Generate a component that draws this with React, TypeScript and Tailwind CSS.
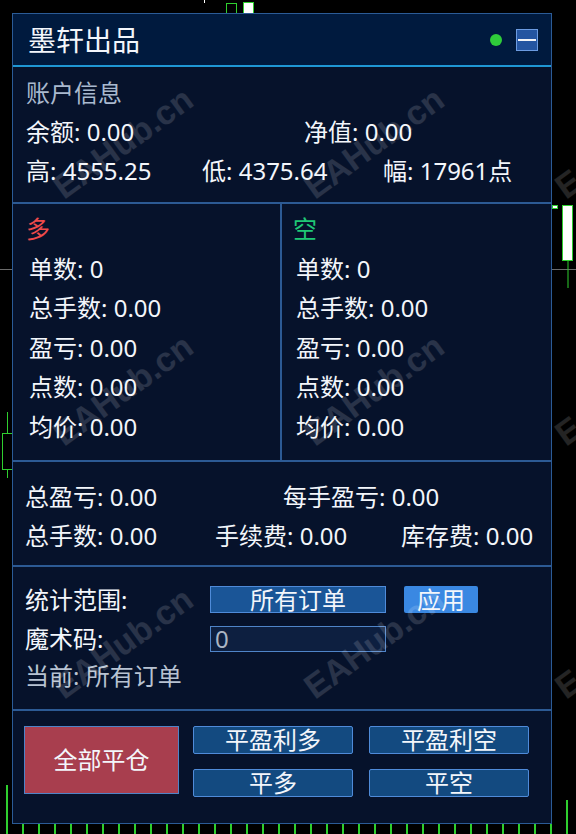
import React from 'react'

// Trading stats panel floating over a dark chart

const FONT = "font-['Noto_Sans','Noto_Sans_CJK_SC',sans-serif]"

const marks = [
  'left-[123px] top-[143px]',
  'left-[374px] top-[143px]',
  'left-[625px] top-[143px]',
  'left-[123px] top-[390px]',
  'left-[374px] top-[390px]',
  'left-[625px] top-[390px]',
  'left-[123px] top-[643px]',
  'left-[374px] top-[643px]',
  'left-[625px] top-[643px]',
  'left-[123px] top-[896px]',
  'left-[374px] top-[896px]',
]

const sideRows = ['单数: 0', '总手数: 0.00', '盈亏: 0.00', '点数: 0.00', '均价: 0.00']

const ChartBackdrop: React.FC = () => {
  const ticks = []
  for (let x = 23; x <= 551; x += 16) ticks.push(x)
  return (
    <svg className="absolute inset-0 h-full w-full" viewBox="0 0 576 834">
      <line x1="0" y1="269.5" x2="576" y2="269.5" stroke="#6b6b6b" strokeWidth="1" />
      {ticks.map((x) => (
        <line key={x} x1={x} y1="824" x2={x} y2="834" stroke="#2fcf2f" strokeWidth="2" />
      ))}
      <line x1="7" y1="785" x2="7" y2="834" stroke="#2fcf2f" strokeWidth="2" />
      <line x1="567" y1="800" x2="567" y2="834" stroke="#2fcf2f" strokeWidth="2" />
      <line x1="204.5" y1="0" x2="204.5" y2="3" stroke="#ffffff" strokeWidth="1" />
      <rect x="226.5" y="3.5" width="10" height="12" fill="none" stroke="#2fcf2f" strokeWidth="1" />
      <rect x="243.5" y="2.5" width="10" height="12" fill="#ffffff" stroke="#2fcf2f" strokeWidth="1" />
      <rect x="562.5" y="205.5" width="10" height="55" fill="#ffffff" stroke="#2fcf2f" strokeWidth="1" />
      <line x1="568" y1="261" x2="568" y2="288" stroke="#2fcf2f" strokeWidth="1" />
      <rect x="552.5" y="205.5" width="5" height="3" fill="#ffffff" stroke="#2fcf2f" strokeWidth="1" />
      <line x1="7.5" y1="412" x2="7.5" y2="478" stroke="#2fcf2f" strokeWidth="1" />
      <rect x="2.5" y="433.5" width="10" height="36" fill="#000000" stroke="#2fcf2f" strokeWidth="1" />
    </svg>
  )
}

const App: React.FC = () => {
  return (
    <div className={`relative h-[834px] w-[576px] overflow-hidden bg-black ${FONT}`}>
      <ChartBackdrop />

      <div className="relative ml-[12px] mt-[13px] flex h-[811px] w-[540px] flex-col border border-[#2b5b96] bg-[#06122b] text-[24px] leading-none text-[#f3f6fb]">
        {/* title bar */}
        <div className="flex h-[53px] items-center justify-between border-b-2 border-[#1f97d4] bg-[#001a3e] pl-[15px] pr-[13px]">
          <span className="text-[28px]">墨轩出品</span>
          <div className="flex items-center gap-[14px]">
            <span className="h-[12px] w-[12px] rounded-full bg-[#2fcc3a]" />
            <button className="flex h-[22px] w-[22px] items-center justify-center border border-[#6c9be0] bg-[#2455a1]">
              <span className="h-[2px] w-[18px] bg-[#f2f4f8]" />
            </button>
          </div>
        </div>

        {/* account */}
        <div className="h-[137px] border-b-2 border-[#2c5a94] pl-[13px] pt-[6px]">
          <div className="flex h-[39px] items-center text-[#a9b9cf]">账户信息</div>
          <div className="flex h-[39px] items-center">
            <span className="w-[278px]">余额: 0.00</span>
            <span>净值: 0.00</span>
          </div>
          <div className="flex h-[39px] items-center">
            <span className="w-[176px]">高: 4555.25</span>
            <span className="w-[181px]">低: 4375.64</span>
            <span>幅: 17961点</span>
          </div>
        </div>

        {/* long / short */}
        <div className="flex h-[258px] border-b-2 border-[#2c5a94]">
          <div className="w-[269px] border-r-2 border-[#2c5a94] pt-[5px]">
            <div className="flex h-[40px] items-center pl-[13px] text-[#ef4b4b]">多</div>
            {sideRows.map((r) => (
              <div key={r} className="flex h-[39.5px] items-center pl-[16px]">{r}</div>
            ))}
          </div>
          <div className="flex-1 pt-[5px]">
            <div className="flex h-[40px] items-center pl-[11px] text-[#1fc876]">空</div>
            {sideRows.map((r) => (
              <div key={r} className="flex h-[39.5px] items-center pl-[14px]">{r}</div>
            ))}
          </div>
        </div>

        {/* totals */}
        <div className="h-[105px] border-b-2 border-[#2c5a94] pl-[12px] pt-[15px]">
          <div className="flex h-[39px] items-center">
            <span className="w-[258px]">总盈亏: 0.00</span>
            <span>每手盈亏: 0.00</span>
          </div>
          <div className="flex h-[39px] items-center">
            <span className="w-[190px]">总手数: 0.00</span>
            <span className="w-[186px]">手续费: 0.00</span>
            <span>库存费: 0.00</span>
          </div>
        </div>

        {/* filter */}
        <div className="flex h-[144px] flex-col border-b-2 border-[#2c5a94] pl-[12px] pt-[19px]">
          <div className="flex h-[27px] items-center">
            <span className="w-[185px]">统计范围:</span>
            <button className="flex h-[27px] w-[176px] items-center justify-center border border-[#4f8bd9] bg-[#1a5597] leading-none">
              所有订单
            </button>
            <button className="ml-[18px] flex h-[27px] w-[74px] items-center justify-center rounded-[2px] bg-[#3a88e2] leading-none">
              应用
            </button>
          </div>
          <div className="mt-[13px] flex h-[26px] items-center">
            <span className="w-[185px]">魔术码:</span>
            <div className="flex h-[26px] w-[176px] items-center border border-[#4f84c8] bg-[#0d1f40] pl-[4px] text-[#aab5c4]">
              0
            </div>
          </div>
          <div className="mt-[9px] flex h-[30px] items-center text-[#b7c2d2]">当前: 所有订单</div>
        </div>

        {/* actions */}
        <div className="flex gap-[14px] pl-[11px] pt-[15px]">
          <button className="flex h-[68px] w-[155px] items-center justify-center border border-[#4f84c8] bg-[#a83e4e]">
            全部平仓
          </button>
          <div className="grid grid-cols-[160px_160px] gap-x-[16px] gap-y-[15px]">
            {['平盈利多', '平盈利空', '平多', '平空'].map((t) => (
              <button
                key={t}
                className="flex h-[28px] items-center justify-center rounded-[2px] border border-[#4f8bd9] bg-[#134a80]"
              >
                {t}
              </button>
            ))}
          </div>
        </div>
      </div>

      {/* watermark */}
      <div className="pointer-events-none absolute inset-0">
        {marks.map((m) => (
          <span
            key={m}
            className={`absolute ${m} -translate-x-1/2 -translate-y-1/2 -rotate-[36deg] whitespace-nowrap font-['Liberation_Sans',sans-serif] text-[34px] font-bold text-white/[0.14]`}
          >
            EAHub.cn
          </span>
        ))}
      </div>
    </div>
  )
}

export default App
